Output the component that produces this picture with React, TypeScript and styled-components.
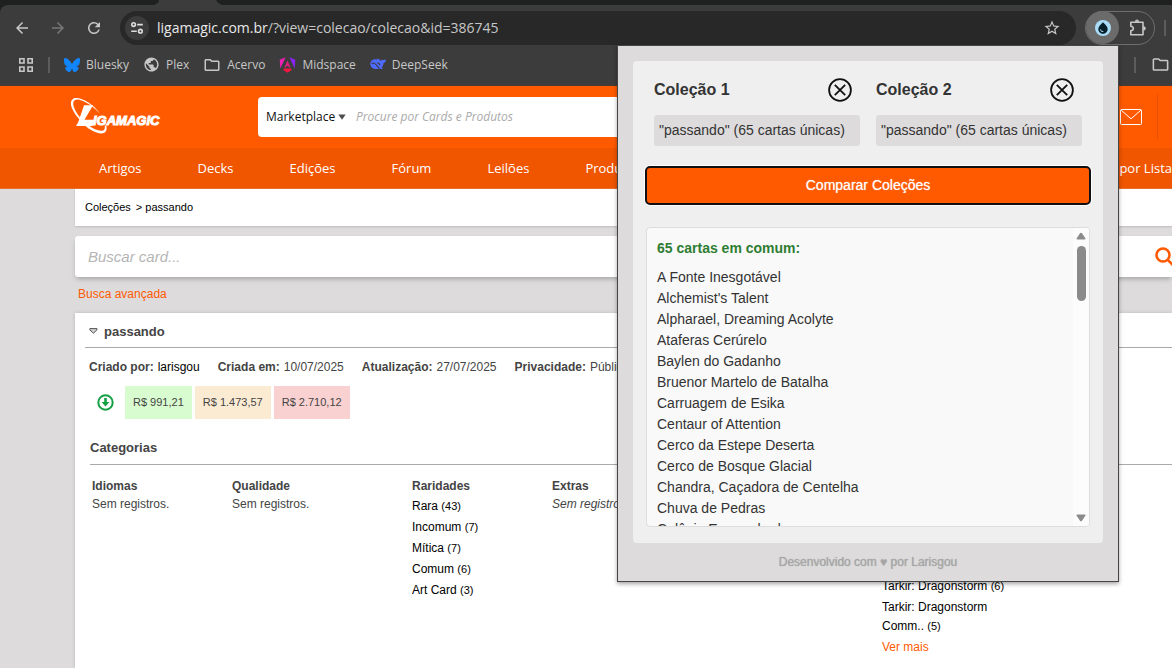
import React from "react";
import styled, { createGlobalStyle } from "styled-components";
import {
  MdArrowBack,
  MdArrowForward,
  MdRefresh,
  MdStarOutline,
  MdOutlineFolder,
  MdPublic,
  MdWaterDrop,
} from "react-icons/md";
import { FaBluesky } from "react-icons/fa6";

const orange = "#ff5a00";
const sans = `"Liberation Sans", Arial, sans-serif`;
const humanist = `"Open Sans", "Noto Sans", sans-serif`;

const GlobalStyle = createGlobalStyle`
  * { box-sizing: border-box; }
  html, body, #root { height: 100%; }
  body { margin: 0; overflow: hidden; font-family: ${sans}; background: #dddbdc; }
  button, input, select { font: inherit; }
  button { cursor: pointer; }
  a { text-decoration: none; color: inherit; }
  h1, h2, h3, p, ul, dl, dd { margin: 0; padding: 0; }
  ul { list-style: none; }
  svg { display: block; flex: none; }
`;

const Window = styled.div`
  position: relative;
  display: flex;
  flex-direction: column;
  height: 100%;
  overflow: hidden;
`;

/* ---------- browser chrome ---------- */

const TabStrip = styled.div`
  flex: none;
  height: 5px;
  padding-left: 154px;
  background: #1f2020;
`;

const ActiveTab = styled.div`
  width: 68px;
  height: 5px;
  background: #3c3c3c;
  clip-path: polygon(5px 0, 62px 0, 64px 3px, 68px 5px, 0 5px, 4px 3px);
`;

const Toolbar = styled.div`
  flex: none;
  display: flex;
  align-items: center;
  height: 41px;
  padding: 4px 0 0 4px;
  background: #3c3c3c;
  border-radius: 8px 0 0 0;
  box-shadow: -8px -8px 0 #1f2020;
`;

const ToolButton = styled.button<{ $dim?: boolean }>`
  display: flex;
  align-items: center;
  justify-content: center;
  flex: none;
  width: 36px;
  height: 34px;
  padding: 0;
  border: 0;
  background: none;
  color: ${(p) => (p.$dim ? "#777777" : "#c7c7c7")};
`;

const Omnibox = styled.div`
  flex: 1;
  display: flex;
  align-items: center;
  gap: 8px;
  height: 34px;
  margin: 0 9px 0 8px;
  padding: 0 6px 0 5px;
  border-radius: 17px;
  background: #282828;
`;

const SiteInfo = styled.button`
  display: flex;
  align-items: center;
  justify-content: center;
  width: 24px;
  height: 24px;
  padding: 0;
  border: 0;
  border-radius: 12px;
  background: #3c3c3c;
  color: #dddddd;
`;

const Address = styled.div`
  flex: 1;
  font: 14px/20px ${humanist};
  color: #c7c7c7;
  white-space: nowrap;

  b {
    font-weight: 400;
    color: #e8e8e8;
  }
`;

const ExtensionGroup = styled.div`
  display: flex;
  align-items: center;
  width: 70px;
  height: 34px;
  border: 1px solid #6e6e6e;
  border-radius: 17px;
`;

const ExtensionButton = styled.button`
  display: flex;
  align-items: center;
  justify-content: center;
  flex: none;
  width: 33px;
  height: 33px;
  padding: 0;
  border: 0;
  border-radius: 17px;
  background: #6b6b6b;
`;

const DropBadge = styled.span`
  display: flex;
  align-items: center;
  justify-content: center;
  width: 16px;
  height: 16px;
  border-radius: 8px;
  background: #a9ddf7;
  color: #08202c;
`;

const Separator = styled.span<{ $before: number; $after: number }>`
  flex: none;
  width: 2px;
  height: 16px;
  margin: 0 ${(p) => p.$after}px 0 ${(p) => p.$before}px;
  background: #5c5c5c;
`;

const BookmarksBar = styled.nav`
  flex: none;
  display: flex;
  align-items: center;
  height: 40px;
  padding: 0 2px 2px 18px;
  background: #3c3c3c;
  border-bottom: 1px solid #4a3a34;
`;

const Bookmark = styled.a`
  display: flex;
  align-items: center;
  gap: 6px;
  margin-right: 14px;
  font: 12px/16px ${humanist};
  color: #c7c7c7;
  white-space: nowrap;
`;

const Spacer = styled.span`
  flex: 1;
`;

/* ---------- site header ---------- */

const SiteHeader = styled.header`
  flex: none;
  display: flex;
  align-items: center;
  height: 62px;
  padding-left: 70px;
  background: ${orange};
`;

const LogoLink = styled.a`
  width: 188px;
`;

const SiteSearch = styled.form`
  flex: 1;
  display: flex;
  align-items: center;
  height: 40px;
  margin-right: 60px;
  padding-left: 8px;
  border-radius: 4px;
  background: #ffffff;
`;

const ScopePicker = styled.label`
  display: flex;
  align-items: center;
  gap: 2px;
  color: #4d4d4d;
`;

const ScopeSelect = styled.select`
  appearance: none;
  padding: 0;
  border: 0;
  background: none;
  font: 12px/20px ${humanist};
  color: #111111;
`;

const SiteSearchInput = styled.input`
  flex: 1;
  min-width: 0;
  margin-left: 10px;
  padding: 0;
  border: 0;
  outline: 0;
  background: none;
  font: 12px/20px ${humanist};

  &::placeholder {
    font-style: italic;
    color: #aaaaaa;
  }
`;

const MailButton = styled.button`
  padding: 0;
  border: 0;
  background: none;
  color: #ffffff;
`;

const HeaderDivider = styled.span`
  width: 1px;
  height: 46px;
  margin: 0 14px;
  background: #e85200;
`;

const MainNav = styled.nav`
  flex: none;
  display: flex;
  align-items: center;
  height: 41px;
  padding-left: 71px;
  background: #f05500;
  border-bottom: 1px solid #e8702e;
`;

const NavLink = styled.a<{ $last?: boolean }>`
  padding: 0 ${(p) => (p.$last ? 0 : 28)}px 0 28px;
  font: 13px/20px ${humanist};
  color: #ffffff;
  white-space: nowrap;
`;

/* ---------- page body ---------- */

const Content = styled.main`
  flex: 1;
  display: flex;
  flex-direction: column;
  min-height: 0;
  padding-left: 75px;
`;

const Breadcrumb = styled.nav`
  flex: none;
  display: flex;
  align-items: center;
  gap: 5px;
  height: 37px;
  padding: 0 0 2px 10px;
  background: #ffffff;
  box-shadow: 0 1px 2px rgba(0, 0, 0, 0.15);
  font-size: 11px;
  color: #000000;
`;

const CardSearch = styled.form`
  flex: none;
  display: flex;
  align-items: center;
  height: 41px;
  margin: 10px 0 8px;
  padding-left: 13px;
  border-radius: 3px 0 0 3px;
  background: #ffffff;
  box-shadow: 0 3px 5px -1px rgba(0, 0, 0, 0.25);
`;

const CardSearchInput = styled.input`
  flex: 1;
  padding: 0;
  border: 0;
  outline: 0;
  font-size: 15px;

  &::placeholder {
    font-style: italic;
    color: #b5b5b5;
  }
`;

const SearchButton = styled.button`
  padding: 0;
  border: 0;
  background: none;
  color: ${orange};
`;

const OrangeLink = styled.a`
  color: ${orange};
`;

const AdvancedRow = styled.div`
  flex: none;
  height: 28px;
  padding-left: 3px;
  font-size: 12px;
  line-height: 18px;
`;

const Panel = styled.section`
  flex: 1;
  min-height: 0;
  padding-left: 10px;
  background: #ffffff;
  box-shadow: 0 0 4px rgba(0, 0, 0, 0.16);
  color: #444444;
`;

const PanelTitle = styled.h1`
  display: flex;
  align-items: center;
  gap: 6px;
  height: 35px;
  padding: 2px 0 0 4px;
  border-bottom: 1px solid #a9a9a9;
  font-size: 13px;
  font-weight: 700;
`;

const PanelBody = styled.div`
  padding-left: 4px;
`;

const InfoList = styled.dl`
  display: flex;
  gap: 18px;
  height: 38px;
  font-size: 12px;
  line-height: 38px;
  white-space: nowrap;

  div {
    display: flex;
    gap: 4px;
  }

  dt {
    font-weight: 700;
  }

  a {
    color: #000000;
  }
`;

const PriceRow = styled.div`
  display: flex;
  align-items: center;
  gap: 3px;
  height: 33px;
  padding-left: 8px;

  svg {
    margin-right: 8px;
  }
`;

const tones = { low: "#d9fbd0", mid: "#fcebd3", high: "#fad1d1" };

const Price = styled.span<{ $tone: keyof typeof tones }>`
  padding: 0 8px;
  font-size: 11px;
  line-height: 33px;
  white-space: nowrap;
  background: ${(p) => tones[p.$tone]};
`;

const Categories = styled.section`
  padding-left: 1px;
`;

const SectionTitle = styled.h2`
  height: 46px;
  padding-top: 19px;
  border-bottom: 1px solid #a9a9a9;
  font-size: 13px;
  line-height: 20px;
`;

const Columns = styled.div`
  display: flex;
  padding: 12px 0 0 2px;
`;

const Column = styled.div<{ $width: number }>`
  flex: none;
  width: ${(p) => p.$width}px;
  font-size: 12px;
  line-height: 18px;
`;

const ColumnTitle = styled.h3`
  font-size: 12px;
  line-height: 18px;
`;

const Empty = styled.p<{ $italic?: boolean }>`
  font-style: ${(p) => (p.$italic ? "italic" : "normal")};
`;

const Facets = styled.ul<{ $skip?: number }>`
  padding-top: ${(p) => p.$skip ?? 2}px;
  line-height: 19px;
  color: #000000;

  li {
    margin-bottom: 2px;
  }

  small {
    font-size: 11px;
  }
`;

/* ---------- extension popup ---------- */

const Popup = styled.aside`
  position: absolute;
  top: 45px;
  right: 53px;
  width: 502px;
  padding: 15px 15px 0;
  border: 1px solid #454545;
  background: #dddbdc;
  box-shadow: 0 2px 4px rgba(0, 0, 0, 0.35);
`;

const PopupCard = styled.div`
  padding: 16px 13px;
  border-radius: 4px;
  background: #efefef;
`;

const Pair = styled.div`
  display: grid;
  grid-template-columns: 1fr 1fr;
  gap: 16px;
  padding: 0 8px;
`;

const SlotHead = styled.div`
  display: flex;
  align-items: center;
  justify-content: space-between;
  height: 26px;
  padding-right: 8px;
`;

const SlotTitle = styled.h2`
  font-size: 16px;
  color: #333333;
`;

const ClearButton = styled.button`
  padding: 0;
  border: 0;
  background: none;
  color: #111111;
`;

const SlotValue = styled.p`
  margin-top: 12px;
  padding: 0 5px;
  border-radius: 3px;
  background: #dddbdc;
  font-size: 14px;
  line-height: 31px;
  color: #333333;
  white-space: nowrap;
`;

const CompareButton = styled.button`
  display: block;
  width: calc(100% + 2px);
  height: 39px;
  margin: 20px -1px 22px;
  padding: 0 0 2px;
  border: 2px solid #101010;
  border-radius: 5px;
  box-shadow: 0 0 0 1px #ffffff;
  background: ${orange};
  font-size: 14px;
  color: #ffffff;
  text-shadow: 0 0 1px rgba(255, 255, 255, 0.7);
`;

const Results = styled.div`
  display: flex;
  height: 300px;
  overflow: hidden;
  border: 1px solid #dddddd;
  border-radius: 4px;
  background: #f9f9f9;
`;

const ResultsText = styled.div`
  flex: 1;
  height: 298px;
  padding: 10px;
  overflow: hidden;
  font-size: 14px;
  line-height: 21px;
  color: #333333;

  h3 {
    margin-bottom: 8px;
    font-size: 14px;
    color: #2e7d32;
  }
`;

const ScrollTrack = styled.div`
  display: flex;
  flex-direction: column;
  align-items: center;
  width: 16px;
  padding: 4px 0;
  background: #fcfcfc;
  color: #8b8b8b;
`;

const ScrollThumb = styled.span`
  width: 9px;
  height: 55px;
  margin: 6px 0 auto;
  border-radius: 5px;
  background: #8b8b8b;
`;

const Credit = styled.p`
  font-size: 12px;
  line-height: 38px;
  text-align: center;
  color: #a6a6a6;
  text-shadow: 0 0 1px #a6a6a6;
`;

/* ---------- drawings ---------- */

const TuneIcon = () => (
  <svg width="14" height="14" viewBox="0 0 14 14" fill="none" stroke="currentColor" strokeWidth="1.6">
    <circle cx="3.6" cy="3.6" r="1.8" />
    <path d="M7.2 3.6h5.6M1.2 10.2h5.6" />
    <circle cx="10.4" cy="10.2" r="1.8" />
  </svg>
);

const PuzzleIcon = () => (
  <svg width="18" height="18" viewBox="-2 0 18 18" fill="none" stroke="currentColor" strokeWidth="1.6" strokeLinejoin="round">
    <path d="M.8 3.200H13v12.600H.8v-4.100c3.400-.3 3.400-4.100 0-4.400z" />
    <path d="M5.300 2.600a1.700 1.700 0 0 1 3.400 0zM13.600 7.600a1.800 1.800 0 0 1 0 3.600z" fill="currentColor" strokeWidth="0.800" />
  </svg>
);

const GridIcon = () => (
  <svg width="16" height="16" viewBox="0 0 16 16" fill="none" stroke="#c7c7c7" strokeWidth="1.6">
    <path d="M1.800 1.800h4.200v4.200H1.800zM10 1.800h4.200v4.200H10zM1.800 10h4.200v4.200H1.800zM10 10h4.200v4.200H10z" />
  </svg>
);

const AngularIcon = () => (
  <svg width="17" height="16" viewBox="0 0 17 16">
    <path fill="#8a24f5" d="M10.400 .3L16.300 2.800L15.700 11.600z" />
    <path fill="#f01fb4" d="M6.600 .3L.7 2.800L1.300 11.600z" />
    <path fill="#f5173f" d="M12.700 13L8.500 15.700L4.300 13L5 11.500H12z" />
    <path fill="#e0207c" d="M8.500 3.600L11.600 10.600H9.900L9.300 9.100H7.700L7.100 10.600H5.400z" />
  </svg>
);

const DeepSeekIcon = () => (
  <svg width="16" height="13" viewBox="0 0 16 13">
    <path
      fill="#4d6bfe"
      d="M.3 5.800C.4 2.600 3 .9 5.400 1.300c.8.1 1.300.4 1.800.2.5-.3-.1-.9.6-1 .9 0 1.500 1.200 2.400 2 .6.600 1.200.5 1.200-.2 0-.6.2-.9.600-.6.700.600 1.500.4 2.200.1.600-.300 1.500-.700 1.600 0 .1 1.800-.9 3.100-2.300 3.400-.2 1.900-.9 3.300-1.900 4.200.6.4 1.200.5 1.400.9.100.5-.9.700-1.800.6-.7-.1-1.200-.5-1.800-.4C5 12 .3 10.200.3 5.800z"
    />
    <path
      fill="none"
      stroke="#3c3c3c"
      strokeWidth="1.100"
      d="M2 6.200c.2-1.300 1.600-1.500 2.900-.6 2 1.400 2.700 3.700 4.600 4.600M7.400 4.900c1.400.1 2.300 1 2.500 2.200"
    />
  </svg>
);

const Logo = () => (
  <svg width="96" height="40" viewBox="0 0 96 40" role="img" aria-label="LigaMagic">
    <path
      fill="#ffffff"
      d="M9.500 22.500C4.500 17 .8 10.500.9 6.300 1 2.200 4.300 .1 8.800 1.300c8.500 2.200 16.500 8.400 21 15.200-5.700-6.500-13-11.700-20-13.600C6 1.900 3.200 3.400 3.200 6.600c0 3.900 3.300 9.700 7.200 14.400z"
    />
    <path
      fill="#ffffff"
      d="M14.500 28.300c5 4.500 12.200 8.200 17 8.100 4.700-.1 5.800-3.400 4.800-7.900h-1.600c.6 3.400-.3 5.300-3.600 5.300-3.800 0-8.500-2.400-12.600-5.500z"
    />
    <path fill="#ffffff" d="M14 8.300h9L14.500 22.800h10.600l-2.700 6.200H6l2.100-3.400z" />
    <text
      x="23"
      y="28"
      fill="#ffffff"
      stroke="#ffffff"
      strokeWidth="1"
      fontFamily="Liberation Sans, Arial, sans-serif"
      fontSize="13"
      fontWeight="700"
      fontStyle="italic"
    >
      IGAMAGIC
    </text>
  </svg>
);

const CaretDown = () => (
  <svg width="8" height="6" viewBox="0 0 8 6" fill="currentColor">
    <path d="M.3.400h7.400L4 5.800z" />
  </svg>
);

const MailIcon = () => (
  <svg width="23" height="17" viewBox="0 0 23 17" fill="none" stroke="currentColor" strokeWidth="1">
    <rect x="0.500" y="0.500" width="21" height="15" rx="1" />
    <path d="M1 1l10 8.800L21 1" />
  </svg>
);

const LensIcon = () => (
  <svg width="17" height="20" viewBox="0 0 17 20" fill="none" stroke="currentColor" strokeWidth="2.600">
    <circle cx="8" cy="8" r="6.500" />
    <path d="M12.500 12.700l6 6" />
  </svg>
);

const ToggleIcon = () => (
  <svg width="9" height="6" viewBox="0 0 9 6" fill="#cfcfcf" stroke="#555555">
    <path d="M.8.6h7.200v1.200L4.400 5.200.8 1.800z" />
  </svg>
);

const DownloadIcon = () => (
  <svg width="17" height="17" viewBox="0 0 17 17" fill="none" stroke="#16a045" strokeWidth="2">
    <circle cx="8.500" cy="8.500" r="7.200" />
    <path d="M8.500 4v5" strokeWidth="2.600" />
    <path d="M4.600 8h7.800l-3.900 4.600z" fill="#16a045" stroke="none" />
  </svg>
);

const ClearIcon = () => (
  <svg width="24" height="24" viewBox="0 0 24 24" fill="none" stroke="currentColor" strokeWidth="1.800">
    <circle cx="12" cy="12" r="10.900" />
    <path d="M6.800 6.800l10.400 10.400M17.200 6.800L6.800 17.200" />
  </svg>
);

const ScrollArrow = ({ down }: { down?: boolean }) => (
  <svg width="10" height="8" viewBox="0 0 10 8" fill="currentColor">
    <path d={down ? "M.5 1.500Q.5.500 1.500.5h7q1 0 1 1L6 6.700q-1 1.200-2 0z" : "M.5 6.500q0 1 1 1h7q1 0 1-1L6 1.300q-1-1.200-2 0z"} />
  </svg>
);

/* ---------- data ---------- */

const navItems = ["Artigos", "Decks", "Edições", "Fórum", "Leilões", "Produtos"];

const rarities = [
  ["Rara", 43],
  ["Incomum", 7],
  ["Mítica", 7],
  ["Comum", 6],
  ["Art Card", 3],
] as const;

const commonCards = [
  "A Fonte Inesgotável",
  "Alchemist's Talent",
  "Alpharael, Dreaming Acolyte",
  "Ataferas Cerúrelo",
  "Baylen do Gadanho",
  "Bruenor Martelo de Batalha",
  "Carruagem de Esika",
  "Centaur of Attention",
  "Cerco da Estepe Deserta",
  "Cerco de Bosque Glacial",
  "Chandra, Caçadora de Centelha",
  "Chuva de Pedras",
  "Colônia Emaranhada",
];

const Slot = ({ n }: { n: number }) => (
  <div>
    <SlotHead>
      <SlotTitle>Coleção {n}</SlotTitle>
      <ClearButton type="button" aria-label={`Limpar coleção ${n}`}>
        <ClearIcon />
      </ClearButton>
    </SlotHead>
    <SlotValue>"passando" (65 cartas únicas)</SlotValue>
  </div>
);

export default function App() {
  return (
    <Window>
      <GlobalStyle />
      <TabStrip>
        <ActiveTab />
      </TabStrip>
      <Toolbar>
        <ToolButton aria-label="Voltar">
          <MdArrowBack size={18} />
        </ToolButton>
        <ToolButton $dim aria-label="Avançar">
          <MdArrowForward size={18} />
        </ToolButton>
        <ToolButton aria-label="Recarregar">
          <MdRefresh size={18} />
        </ToolButton>
        <Omnibox>
          <SiteInfo aria-label="Informações do site">
            <TuneIcon />
          </SiteInfo>
          <Address>
            <b>ligamagic.com.br</b>/?view=colecao/colecao&amp;id=386745
          </Address>
          <ToolButton aria-label="Favoritar">
            <MdStarOutline size={18} />
          </ToolButton>
        </Omnibox>
        <ExtensionGroup>
          <ExtensionButton aria-label="Comparador de coleções">
            <DropBadge>
              <MdWaterDrop size={14} />
            </DropBadge>
          </ExtensionButton>
          <ToolButton aria-label="Extensões">
            <PuzzleIcon />
          </ToolButton>
        </ExtensionGroup>
        <Separator $before={9} $after={6} />
      </Toolbar>
      <BookmarksBar aria-label="Favoritos">
        <GridIcon />
        <Separator $before={14} $after={14} />
        <Bookmark href="#">
          <FaBluesky size={16} color="#1185fe" />
          Bluesky
        </Bookmark>
        <Bookmark href="#">
          <MdPublic size={17} />
          Plex
        </Bookmark>
        <Bookmark href="#">
          <MdOutlineFolder size={18} />
          Acervo
        </Bookmark>
        <Bookmark href="#">
          <AngularIcon />
          Midspace
        </Bookmark>
        <Bookmark href="#">
          <DeepSeekIcon />
          DeepSeek
        </Bookmark>
        <Spacer />
        <Separator $before={14} $after={15} />
        <MdOutlineFolder size={19} color="#c7c7c7" />
      </BookmarksBar>

      <SiteHeader>
        <LogoLink href="#">
          <Logo />
        </LogoLink>
        <SiteSearch>
          <ScopePicker>
            <ScopeSelect aria-label="Onde buscar">
              <option>Marketplace</option>
            </ScopeSelect>
            <CaretDown />
          </ScopePicker>
          <SiteSearchInput aria-label="Buscar produtos" placeholder="Procure por Cards e Produtos" />
        </SiteSearch>
        <MailButton aria-label="Mensagens">
          <MailIcon />
        </MailButton>
        <HeaderDivider />
      </SiteHeader>
      <MainNav>
        {navItems.map((item) => (
          <NavLink key={item} href="#">
            {item}
          </NavLink>
        ))}
        <Spacer />
        <NavLink $last href="#">
          por Lista
        </NavLink>
      </MainNav>

      <Content>
        <Breadcrumb aria-label="Trilha">
          <a href="#">Coleções</a>
          <span>&gt; passando</span>
        </Breadcrumb>
        <CardSearch>
          <CardSearchInput aria-label="Buscar card" placeholder="Buscar card..." />
          <SearchButton type="button" aria-label="Buscar">
            <LensIcon />
          </SearchButton>
        </CardSearch>
        <AdvancedRow>
          <OrangeLink href="#">Busca avançada</OrangeLink>
        </AdvancedRow>
        <Panel>
          <PanelTitle>
            <ToggleIcon />
            passando
          </PanelTitle>
          <PanelBody>
            <InfoList>
              <div>
                <dt>Criado por:</dt>
                <dd>
                  <a href="#">larisgou</a>
                </dd>
              </div>
              <div>
                <dt>Criada em:</dt>
                <dd>10/07/2025</dd>
              </div>
              <div>
                <dt>Atualização:</dt>
                <dd>27/07/2025</dd>
              </div>
              <div>
                <dt>Privacidade:</dt>
                <dd>Público</dd>
              </div>
            </InfoList>
            <PriceRow>
              <DownloadIcon />
              <Price $tone="low">R$ 991,21</Price>
              <Price $tone="mid">R$ 1.473,57</Price>
              <Price $tone="high">R$ 2.710,12</Price>
            </PriceRow>
            <Categories>
              <SectionTitle>Categorias</SectionTitle>
              <Columns>
                <Column $width={140}>
                  <ColumnTitle>Idiomas</ColumnTitle>
                  <Empty>Sem registros.</Empty>
                </Column>
                <Column $width={180}>
                  <ColumnTitle>Qualidade</ColumnTitle>
                  <Empty>Sem registros.</Empty>
                </Column>
                <Column $width={140}>
                  <ColumnTitle>Raridades</ColumnTitle>
                  <Facets>
                    {rarities.map(([name, count]) => (
                      <li key={name}>
                        <a href="#">
                          {name} <small>({count})</small>
                        </a>
                      </li>
                    ))}
                  </Facets>
                </Column>
                <Column $width={330}>
                  <ColumnTitle>Extras</ColumnTitle>
                  <Empty $italic>Sem registros.</Empty>
                </Column>
                <Column $width={130}>
                  <Facets $skip={100}>
                    <li>
                      <a href="#">
                        Tarkir: Dragonstorm <small>(6)</small>
                      </a>
                    </li>
                    <li>
                      <a href="#">
                        Tarkir: Dragonstorm Comm.. <small>(5)</small>
                      </a>
                    </li>
                    <li>
                      <OrangeLink href="#">Ver mais</OrangeLink>
                    </li>
                  </Facets>
                </Column>
              </Columns>
            </Categories>
          </PanelBody>
        </Panel>
      </Content>

      <Popup aria-label="Comparador de coleções">
        <PopupCard>
          <Pair>
            <Slot n={1} />
            <Slot n={2} />
          </Pair>
          <CompareButton type="button">Comparar Coleções</CompareButton>
          <Results>
            <ResultsText>
              <h3>65 cartas em comum:</h3>
              <ul>
                {commonCards.map((card) => (
                  <li key={card}>{card}</li>
                ))}
              </ul>
            </ResultsText>
            <ScrollTrack>
              <ScrollArrow />
              <ScrollThumb />
              <ScrollArrow down />
            </ScrollTrack>
          </Results>
        </PopupCard>
        <Credit>Desenvolvido com ♥ por Larisgou</Credit>
      </Popup>
    </Window>
  );
}
